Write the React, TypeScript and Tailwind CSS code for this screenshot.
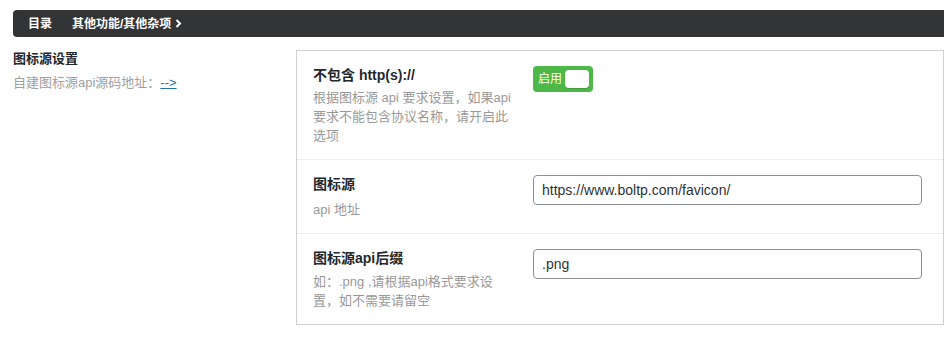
import React from 'react';

const font = { fontFamily: '"Liberation Sans", "Noto Sans CJK SC", sans-serif' };

function Chevron() {
  return (
    <svg width="7" height="9" viewBox="0 0 7 9" className="ml-[4px]">
      <path d="M1.5 1 L5 4.5 L1.5 8" fill="none" stroke="#fff" strokeWidth="2" />
    </svg>
  );
}

function Switch() {
  return (
    <div className="flex h-[26px] w-[60px] items-center justify-between rounded-[4px] bg-[#4db748] pl-[5px] pr-[4px]">
      <span className="text-[12px] leading-none text-white">启用</span>
      <span className="h-[18px] w-[24px] rounded-[4px] bg-white shadow-[0_1px_1px_rgba(0,0,0,0.15)]" />
    </div>
  );
}

function TextInput({ value }: { value: string }) {
  return (
    <div className="flex h-[30px] w-[389px] items-center rounded-[4px] border border-[#8c8f94] bg-white px-[8px] text-[14px] text-[#2c3338]">
      {value}
    </div>
  );
}

const rows = [
  {
    title: '不包含 http(s)://',
    desc: '根据图标源 api 要求设置，如果api要求不能包含协议名称，请开启此选项',
    control: <Switch />,
    descMt: 'mt-[3px]',
  },
  {
    title: '图标源',
    desc: 'api 地址',
    control: <TextInput value="https://www.boltp.com/favicon/" />,
    descMt: 'mt-[6px]',
  },
  {
    title: '图标源api后缀',
    desc: '如：.png ,请根据api格式要求设置，如不需要请留空',
    control: <TextInput value=".png" />,
    descMt: 'mt-[4px]',
  },
];

export default function App() {
  return (
    <div className="min-h-screen bg-white pl-[13px] pr-px pt-[10px]" style={font}>
      {/* breadcrumb bar */}
      <div className="flex h-[27px] items-center rounded-l-[4px] bg-[#333435] pl-[15px] text-[12px] font-bold text-white">
        <span>目录</span>
        <span className="ml-[20px] flex items-center">
          其他功能/其他杂项
          <Chevron />
        </span>
      </div>

      <div className="mt-[13px] flex">
        {/* section info */}
        <div className="w-[283px] shrink-0 pt-[-2px]">
          <div className="-mt-[1.5px] text-[13px] font-bold leading-[20px] text-[#23282d]">图标源设置</div>
          <div className="mt-[4px] text-[13px] leading-[20px] text-[#a0a0a0]">
            自建图标源api源码地址：
            <a href="#" className="text-[#2271b1] underline">--&gt;</a>
          </div>
        </div>

        {/* fields */}
        <div className="flex-1 border border-[#d0d1d7] bg-white">
          {rows.map((row, i) => (
            <div
              key={i}
              className={`flex pl-[16px] pt-[14px] pb-[14px] ${i > 0 ? 'border-t border-[#eeeeee]' : ''} ${i === 0 ? 'pb-[13px]' : ''}`}
            >
              <div className="w-[200px] shrink-0">
                <div className="text-[14px] font-bold leading-[20px] text-[#23282d]">{row.title}</div>
                <div className={`${row.descMt} text-[13px] leading-[19px] text-[#999999]`}>{row.desc}</div>
              </div>
              <div className="ml-[20px] pt-px">{row.control}</div>
            </div>
          ))}
        </div>
      </div>
    </div>
  );
}
